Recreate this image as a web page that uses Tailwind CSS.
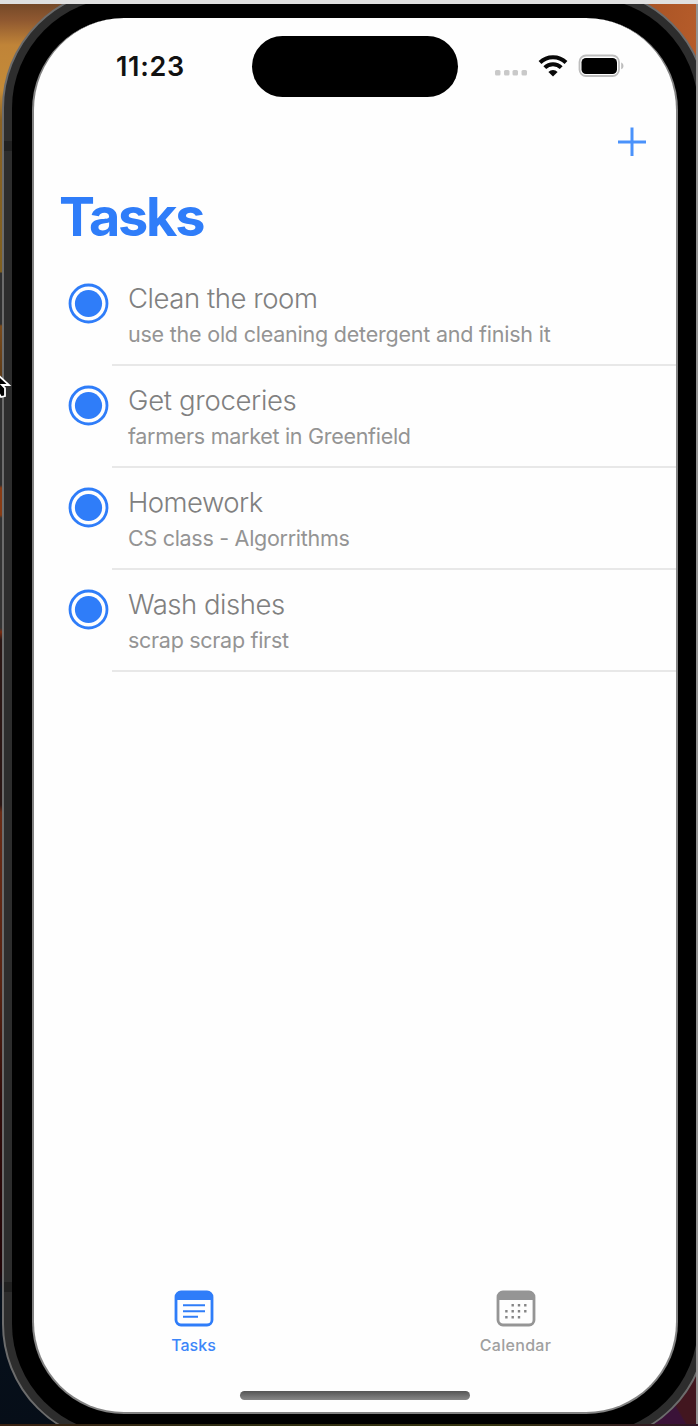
<!DOCTYPE html>
<html lang="en">
<head>
<meta charset="utf-8">
<title>Tasks</title>
<script src="https://cdn.jsdelivr.net/npm/@tailwindcss/browser@4"></script>
</head>
<body class="font-['Inter',sans-serif]">
<div class="relative w-[698px] h-[1426px] overflow-hidden flow-root bg-[linear-gradient(180deg,#6e4526_0px,#8f5830_20px,#c08438_45px,#c48b38_90px,#8a6225_120px,#806020_272px,#303030_273px,#303030_324px,#7a4b1c_326px,#5f3c18_376px,#2f2f2f_377px,#2f2f2f_485px,#8a3c14_488px,#8a3c14_515px,#333_518px,#333_628px,#7a2b10_632px,#2a1715_640px,#2a1715_805px,#6a2c16_812px,#5a2513_985px,#300c0a_1100px,#200508_1270px,#06101c_1290px,#060e18_1426px)]">
  <div class="absolute right-0 top-0 w-[120px] h-[120px] bg-[linear-gradient(100deg,#9a4a20,#b95e2b)]"></div>
  <div class="absolute right-0 bottom-0 w-[70px] h-[80px] bg-[linear-gradient(60deg,#3a1238_50%,#42161f_52%)]"></div>

  <!-- device -->
  <div class="relative -mt-3 ml-[2px] w-[706px] h-[1456px] rounded-[120px] bg-[#2d2d2d] border-2 border-[#6c6c6c] p-2">
    <div class="w-full h-full rounded-[110px] bg-black p-5">
      <main class="w-full h-full rounded-[92px] bg-[#fefefe] border-x-2 border-b-2 border-[#828282] overflow-hidden flex flex-col">
        <header class="flex h-[97px] shrink-0">
          <div class="w-[218px] pl-[82px] pt-[35px] text-[27px] leading-7 font-semibold tracking-[0.7px] text-[#111]">11:23</div>
          <div class="mt-[18px] w-[206px] h-[61px] rounded-full bg-black"></div>
          <svg class="ml-[34px] mt-[34px]" width="136" height="30" viewBox="492 52 136 30">
            <g fill="#c9c9c9"><rect x="495" y="70" width="5.500" height="5.500" rx="1.500"/><rect x="504" y="70" width="5.500" height="5.500" rx="1.500"/><rect x="512.500" y="70" width="5.500" height="5.500" rx="1.500"/><rect x="521.500" y="70" width="5.500" height="5.500" rx="1.500"/></g>
            <g fill="none" stroke="#080808" stroke-width="4"><path d="M540 62.500a18.500 18.500 0 0 1 26 0"/><path d="M544.800 67.600a11.600 11.600 0 0 1 16.400 0"/></g>
            <path d="M553 76.600l-4.600-4.700a6.500 6.500 0 0 1 9.200 0z" fill="#080808"/>
            <rect x="579.500" y="55.500" width="39.500" height="20.500" rx="6.500" fill="none" stroke="#bdbdbd" stroke-width="1.800"/>
            <rect x="581.500" y="58" width="35.500" height="16" rx="4.500" fill="#000"/>
            <path d="M621.200 62.500c3 1.200 3 5.600 0 6.800z" fill="#bdbdbd"/>
          </svg>
        </header>
        <div class="flex justify-end h-[64px] shrink-0 pr-[30px] pt-[12px]">
          <svg width="28" height="30" viewBox="0 0 28 30"><path d="M0 15h28M14 0.500v28.500" stroke="#4a92fb" stroke-width="3" fill="none"/></svg>
        </div>
        <h1 class="h-[85px] shrink-0 pl-[25px] pt-[7px] text-[54px] leading-[62px] font-bold tracking-[-2.200px] text-[#2f7df9]">Tasks</h1>
        <ul class="text-[#8a8a8a]">
          <li class="flex h-[102px]">
            <svg class="ml-[34px] mt-[19px] shrink-0" width="41" height="41" viewBox="0 0 41 41"><circle cx="20.500" cy="20.500" r="18.500" fill="none" stroke="#2f7df9" stroke-width="2.800"/><circle cx="20.500" cy="20.500" r="13.600" fill="#2f7df9"/></svg>
            <div class="ml-[3px] pl-4 pt-[16px] flex-1 border-b-2 border-[#e8e8e8]"><p class="text-[27.500px] leading-9 font-light text-[#808080] tracking-[-0.450px]">Clean the room</p><p class="text-[21.500px] leading-9 tracking-[-0.220px] text-[#949494]">use the old cleaning detergent and finish it</p></div>
          </li>
          <li class="flex h-[102px]">
            <svg class="ml-[34px] mt-[19px] shrink-0" width="41" height="41" viewBox="0 0 41 41"><circle cx="20.500" cy="20.500" r="18.500" fill="none" stroke="#2f7df9" stroke-width="2.800"/><circle cx="20.500" cy="20.500" r="13.600" fill="#2f7df9"/></svg>
            <div class="ml-[3px] pl-4 pt-[16px] flex-1 border-b-2 border-[#e8e8e8]"><p class="text-[27.500px] leading-9 font-light text-[#808080] tracking-[-0.320px]">Get groceries</p><p class="text-[21.500px] leading-9 tracking-[-0.290px] text-[#949494]">farmers market in Greenfield</p></div>
          </li>
          <li class="flex h-[102px]">
            <svg class="ml-[34px] mt-[19px] shrink-0" width="41" height="41" viewBox="0 0 41 41"><circle cx="20.500" cy="20.500" r="18.500" fill="none" stroke="#2f7df9" stroke-width="2.800"/><circle cx="20.500" cy="20.500" r="13.600" fill="#2f7df9"/></svg>
            <div class="ml-[3px] pl-4 pt-[16px] flex-1 border-b-2 border-[#e8e8e8]"><p class="text-[27.500px] leading-9 font-light text-[#808080] tracking-[-0.550px]">Homework</p><p class="text-[21.500px] leading-9 tracking-[-0.290px] text-[#949494]">CS class - Algorrithms</p></div>
          </li>
          <li class="flex h-[102px]">
            <svg class="ml-[34px] mt-[19px] shrink-0" width="41" height="41" viewBox="0 0 41 41"><circle cx="20.500" cy="20.500" r="18.500" fill="none" stroke="#2f7df9" stroke-width="2.800"/><circle cx="20.500" cy="20.500" r="13.600" fill="#2f7df9"/></svg>
            <div class="ml-[3px] pl-4 pt-[16px] flex-1 border-b-2 border-[#e8e8e8]"><p class="text-[27.500px] leading-9 font-light text-[#808080] tracking-[-0.480px]">Wash dishes</p><p class="text-[21.500px] leading-9 tracking-[-0.290px] text-[#949494]">scrap scrap first</p></div>
          </li>
        </ul>
        <nav class="mt-auto flex h-[102px] shrink-0 text-[16px] leading-5 font-medium">
          <div class="w-[320px] flex flex-col items-center text-[#3c86f9]">
            <svg class="mt-px" width="40" height="38" viewBox="0 0 40 38"><rect x="2" y="2" width="36" height="33" rx="5" fill="none" stroke="#2f7df9" stroke-width="2.800"/><path d="M2 10V6q0-4 4-4h28q4 0 4 4v4z" fill="#2f7df9"/><path d="M9 15.200h22M9 21.200h22M9 26.700h15" stroke="#2f7df9" stroke-width="1.900"/></svg>
            <span class="mt-[7px]">Tasks</span>
          </div>
          <div class="w-[324px] pl-[2px] flex flex-col items-center text-[#a0a0a0]">
            <svg class="mt-px" width="40" height="38" viewBox="0 0 40 38"><rect x="2" y="2" width="36" height="33" rx="5" fill="none" stroke="#959595" stroke-width="2.800"/><path d="M2 10V6q0-4 4-4h28q4 0 4 4v4z" fill="#959595"/><g fill="none" stroke="#858585" stroke-width="2.400"><path d="M15.500 15.200h15" stroke-dasharray="2.400 3.900"/><path d="M9.200 21.300h22" stroke-dasharray="2.400 3.900"/><path d="M9.200 27.200h16" stroke-dasharray="2.400 3.900"/></g></svg>
            <span class="mt-[7px] tracking-[0.300px]">Calendar</span>
          </div>
        </nav>
        <div class="self-center h-[21px] shrink-0"><div class="w-[230px] h-[9px] rounded-full bg-[linear-gradient(#555,#888)]"></div></div>
      </main>
    </div>
  </div>

  <!-- antenna bands, window edges and pointer over the device -->
  <div class="absolute left-1 top-[141px] w-2 h-[10px] bg-[#212121]"></div>
  <div class="absolute left-1 top-[1282px] w-2 h-[10px] bg-[#212121]"></div>
  <div class="absolute left-0 top-0 w-full h-1 bg-[#e0e0e0]"></div>
  <div class="absolute right-0 top-1 w-[2px] h-[1422px] bg-[#949494]"></div>
  <div class="absolute left-0 bottom-0 w-full h-[2px] bg-[linear-gradient(90deg,#3a2212,#2f2c12_30%,#35340f_70%,#301525)]"></div>
  <svg class="absolute left-0 top-[374px]" width="12" height="26" viewBox="0 0 12 26"><path d="M-3 0L9 11H2L5 14V22L1 23L-2 18" fill="#000" stroke="#fff" stroke-width="1.800"/></svg>
</div>
</body>
</html>
